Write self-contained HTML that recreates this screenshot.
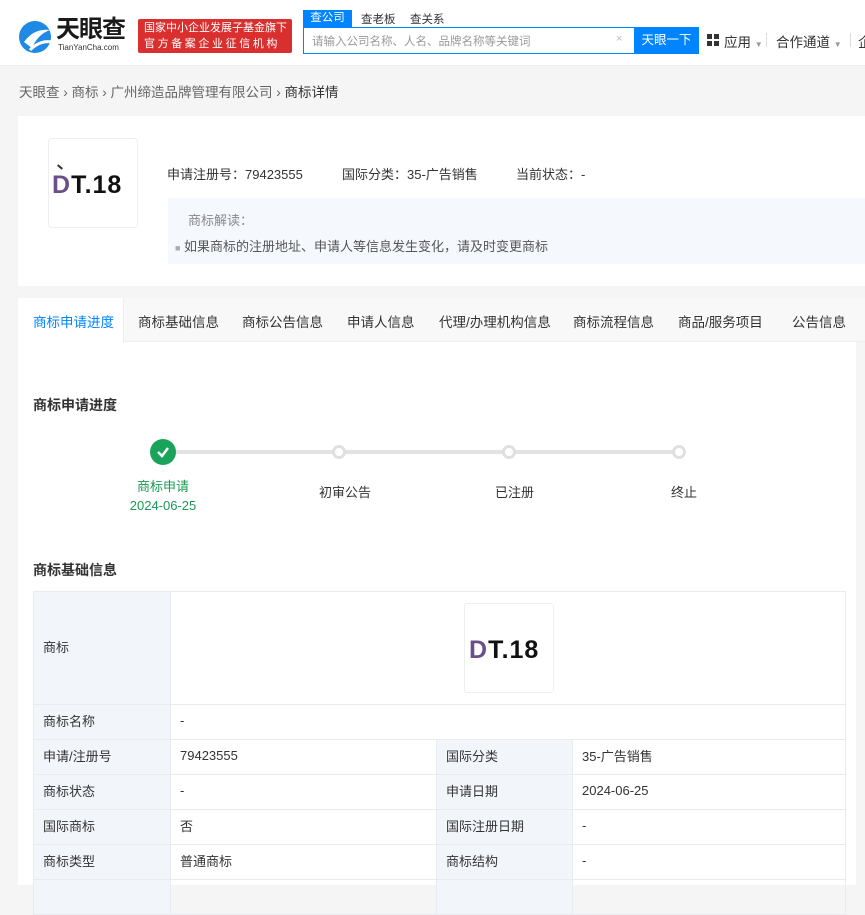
<!DOCTYPE html>
<html><head><meta charset="utf-8"><style>
*{margin:0;padding:0;box-sizing:border-box}
body{width:865px;height:885px;overflow:hidden;background:#f5f5f5;font-family:"Liberation Sans","Noto Sans CJK SC",sans-serif;font-size:13px;color:#333;position:relative}
.a{position:absolute;white-space:nowrap}
.hdr{left:0;top:0;width:865px;height:66px;background:#fff;border-bottom:1px solid #eee}
.logo{font-family:"Liberation Sans",sans-serif;font-weight:bold;letter-spacing:1px;white-space:nowrap}
table{border-collapse:collapse}
td{border:1px solid #e8ecf1;height:35px;padding:0 9px 3px;font-size:13px;color:#333;white-space:nowrap}
td.l{background:#f2f6fb}
.tab{position:absolute;top:311px;font-size:13.5px;color:#333;white-space:nowrap}
</style></head><body>
<div class="a hdr"></div>
<svg class="a" style="left:18px;top:20px" width="36" height="34" viewBox="0 0 36 34"><circle cx="17" cy="17" r="16" fill="#1e8ae6"/><path d="M6 22 Q16 8 32 10 Q20 14 14 28 Z" fill="#fff"/><path d="M12 30 Q22 20 34 22" stroke="#fff" stroke-width="3" fill="none"/></svg>
<div class="a" style="left:56px;top:16px;font-size:24px;font-weight:bold;color:#1a1a1a;letter-spacing:-1px;line-height:28px">天眼查</div>
<div class="a" style="left:58px;top:43px;font-size:8px;color:#333;line-height:10px">TianYanCha.com</div>
<div class="a" style="left:138px;top:19px;width:154px;height:34px;background:#d9302f;color:#fff;font-size:11px;line-height:16px;padding:1px 6px;border-radius:2px;overflow:hidden">国家中小企业发展子基金旗下<br><span style="letter-spacing:2.6px">官方备案企业征信机构</span></div>
<div class="a" style="left:303px;top:10px;width:49px;height:17px;background:#0084ff;color:#fff;font-size:11.5px;text-align:center;line-height:17px">查公司</div>
<div class="a" style="left:361px;top:11px;font-size:11.5px;color:#333">查老板</div>
<div class="a" style="left:410px;top:11px;font-size:11.5px;color:#333">查关系</div>
<div class="a" style="left:303px;top:27px;width:332px;height:27px;border:1px solid #0084ff;background:#fff"></div>
<div class="a" style="left:312px;top:33px;font-size:11.5px;color:#999">请输入公司名称、人名、品牌名称等关键词</div>
<div class="a" style="left:616px;top:33px;font-size:11px;color:#bbb">×</div>
<div class="a" style="left:634px;top:27px;width:65px;height:27px;background:#0084ff;color:#fff;font-size:12.5px;text-align:center;line-height:27px">天眼一下</div>
<div class="a" style="left:707px;top:34px;width:12px;height:12px;background:
 linear-gradient(#333,#333) 0 0/5px 5px no-repeat,linear-gradient(#333,#333) 7px 0/5px 5px no-repeat,linear-gradient(#333,#333) 0 7px/5px 5px no-repeat,linear-gradient(#333,#333) 7px 7px/5px 5px no-repeat"></div>
<div class="a" style="left:724px;top:31px;font-size:13.5px;color:#333">应用 <span style="font-size:8px;color:#999">▼</span></div>
<div class="a" style="left:766px;top:33px;width:1px;height:14px;background:#ddd"></div>
<div class="a" style="left:776px;top:31px;font-size:13.5px;color:#333">合作通道 <span style="font-size:8px;color:#999">▼</span></div>
<div class="a" style="left:850px;top:33px;width:1px;height:14px;background:#ddd"></div>
<div class="a" style="left:858px;top:31px;font-size:13.5px;color:#333">企</div>
<div class="a" style="left:19px;top:81px;font-size:13.5px;color:#666">天眼查 › 商标 › 广州缔造品牌管理有限公司 › <span style="color:#333">商标详情</span></div>
<div class="a" style="left:18px;top:116px;width:847px;height:170px;background:#fff"></div>
<div class="a" style="left:48px;top:138px;width:90px;height:90px;border:1px solid #eee;border-radius:4px;background:#fff"></div>
<div class="a logo" style="left:52px;top:170px;font-size:25px;line-height:30px;color:#111"><span style="color:#6b4f8a">D</span>T.18</div>
<div class="a" style="left:57px;top:166px;width:6px;height:2px;background:#333;transform:rotate(40deg)"></div>
<div class="a" style="left:167px;top:164px;font-size:13px">申请注册号：79423555</div>
<div class="a" style="left:342px;top:164px;font-size:13px">国际分类：35-广告销售</div>
<div class="a" style="left:516px;top:164px;font-size:13px">当前状态：-</div>
<div class="a" style="left:168px;top:198px;width:697px;height:66px;background:#f5f9fd"></div>
<div class="a" style="left:188px;top:210px;font-size:13px;color:#888">商标解读：</div>
<div class="a" style="left:175px;top:236px;font-size:13px;color:#555"><span style="color:#aaa;font-size:9px">■</span> 如果商标的注册地址、申请人等信息发生变化，请及时变更商标</div>
<div class="a" style="left:18px;top:298px;width:838px;height:587px;background:#fff"></div>
<div class="a" style="left:18px;top:298px;width:847px;height:44px;background:#f8f8f8;border-bottom:1px solid #eee"></div>
<div class="a" style="left:18px;top:298px;width:106px;height:45px;background:#fff;border-right:1px solid #eee"></div>
<div class="tab" style="left:33px;color:#0084ff">商标申请进度</div>
<div class="tab" style="left:138px">商标基础信息</div>
<div class="tab" style="left:242px">商标公告信息</div>
<div class="tab" style="left:347px">申请人信息</div>
<div class="tab" style="left:439px">代理/办理机构信息</div>
<div class="tab" style="left:573px">商标流程信息</div>
<div class="tab" style="left:678px">商品/服务项目</div>
<div class="tab" style="left:792px">公告信息</div>
<div class="a" style="left:33px;top:395px;font-size:14px;font-weight:bold;color:#333">商标申请进度</div>
<div class="a" style="left:170px;top:450px;width:510px;height:4px;background:#e2e2e2"></div>
<div class="a" style="left:150px;top:439px;width:26px;height:26px;border-radius:50%;background:#1aa35a"></div>
<svg class="a" style="left:150px;top:439px" width="26" height="26"><path d="M8 13 L12 17 L18 9" stroke="#fff" stroke-width="2.4" fill="none"/></svg>
<div class="a" style="left:332px;top:445px;width:14px;height:14px;border-radius:50%;background:#fff;border:3px solid #e0e0e0"></div>
<div class="a" style="left:502px;top:445px;width:14px;height:14px;border-radius:50%;background:#fff;border:3px solid #e0e0e0"></div>
<div class="a" style="left:672px;top:445px;width:14px;height:14px;border-radius:50%;background:#fff;border:3px solid #e0e0e0"></div>
<div class="a" style="left:113px;top:477px;width:100px;text-align:center;color:#1a9a55;line-height:19px">商标申请<br>2024-06-25</div>
<div class="a" style="left:319px;top:482px">初审公告</div>
<div class="a" style="left:495px;top:482px">已注册</div>
<div class="a" style="left:671px;top:482px">终止</div>
<div class="a" style="left:33px;top:560px;font-size:14px;font-weight:bold;color:#333">商标基础信息</div>
<table class="a" style="left:33px;top:591px;width:813px">
<tr><td class="l" style="height:113px;width:137px">商标</td><td colspan="3" style="position:relative"><div style="position:absolute;left:293px;top:11px;width:90px;height:90px;border:1px solid #eee;border-radius:3px"></div><div class="logo" style="position:absolute;left:298px;top:43px;font-size:25px;line-height:30px;color:#111"><span style="color:#6b4f8a">D</span>T.18</div></td></tr>
<tr><td class="l">商标名称</td><td colspan="3">-</td></tr>
<tr><td class="l">申请/注册号</td><td style="width:266px">79423555</td><td class="l" style="width:136px">国际分类</td><td>35-广告销售</td></tr>
<tr><td class="l">商标状态</td><td>-</td><td class="l">申请日期</td><td>2024-06-25</td></tr>
<tr><td class="l">国际商标</td><td>否</td><td class="l">国际注册日期</td><td>-</td></tr>
<tr><td class="l">商标类型</td><td>普通商标</td><td class="l">商标结构</td><td>-</td></tr>
<tr><td class="l"></td><td></td><td class="l"></td><td></td></tr>
</table>
</body></html>
